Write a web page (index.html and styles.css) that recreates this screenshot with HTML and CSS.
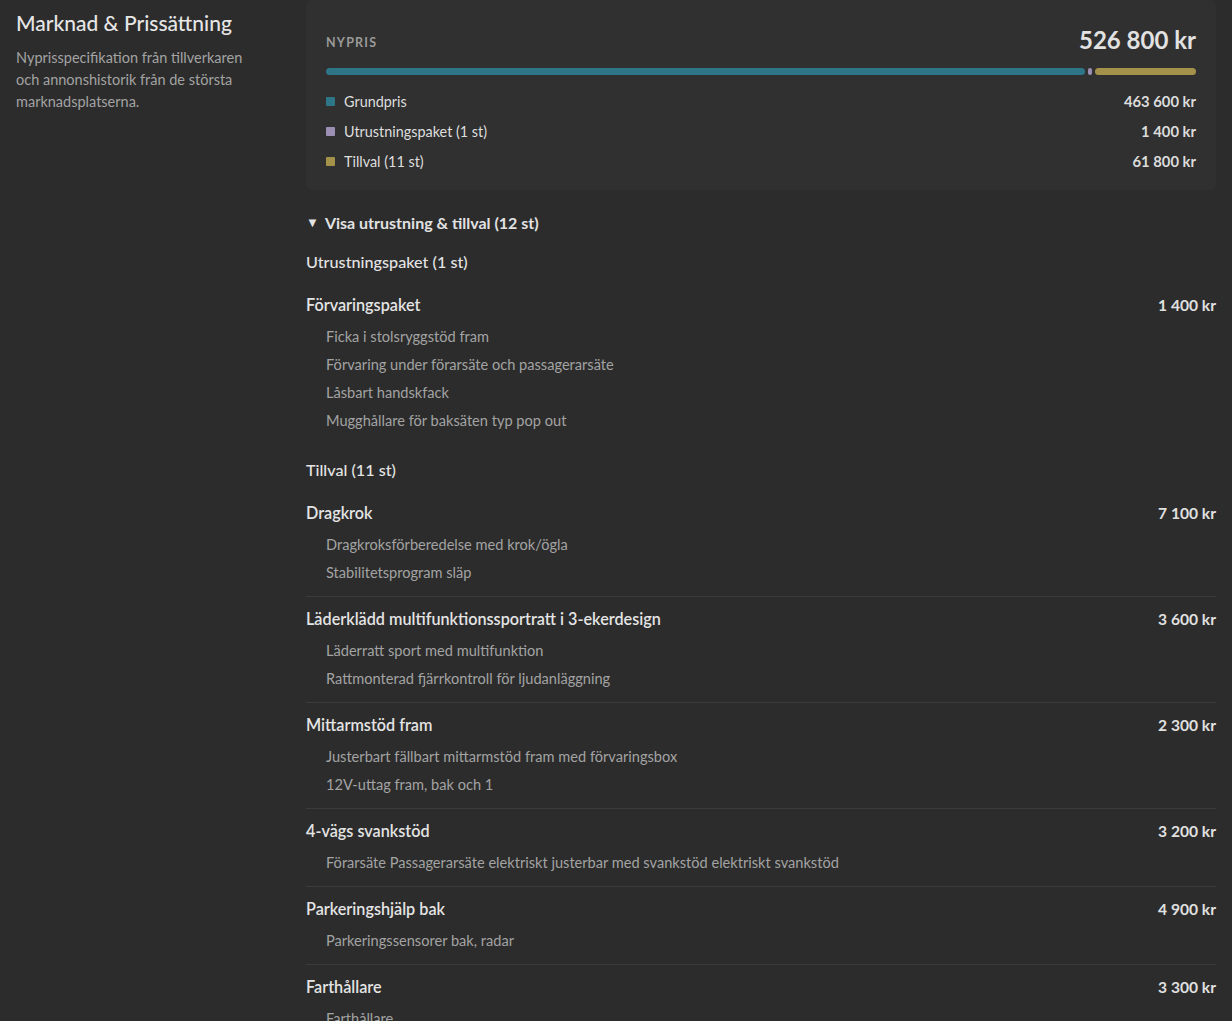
FILE: index.html
```html
<!DOCTYPE html>
<html>
<head>
    <title>Marknad &amp; Prissättning</title>
    <link rel="stylesheet" href="styles.css">
</head>
<body>
    <div class="page">
        <aside class="intro">
            <h1>Marknad &amp; Prissättning</h1>
            <p>Nyprisspecifikation från tillverkaren och annonshistorik från de största marknadsplatserna.</p>
        </aside>

        <main class="content">
            <section class="price-card">
                <div class="price-head">
                    <span class="label">Nypris</span>
                    <span class="total">526 800 kr</span>
                </div>
                <div class="bar">
                    <span class="seg seg-base" style="flex: 463600"></span>
                    <span class="seg seg-pkg" style="flex: 1400; min-width: 4px"></span>
                    <span class="seg seg-opt" style="flex: 61800"></span>
                </div>
                <ul class="legend">
                    <li><span class="dot seg-base"></span><span class="name">Grundpris</span><span class="amount">463 600 kr</span></li>
                    <li><span class="dot seg-pkg"></span><span class="name">Utrustningspaket (1 st)</span><span class="amount">1 400 kr</span></li>
                    <li><span class="dot seg-opt"></span><span class="name">Tillval (11 st)</span><span class="amount">61 800 kr</span></li>
                </ul>
            </section>

            <div class="toggle"><span class="caret">&#9660;</span>Visa utrustning &amp; tillval (12 st)</div>

            <h3 class="group-title">Utrustningspaket (1 st)</h3>
            <div class="item">
                <div class="item-head"><span>Förvaringspaket</span><span class="price">1 400 kr</span></div>
                <ul class="subs">
                    <li>Ficka i stolsryggstöd fram</li>
                    <li>Förvaring under förarsäte och passagerarsäte</li>
                    <li>Låsbart handskfack</li>
                    <li>Mugghållare för baksäten typ pop out</li>
                </ul>
            </div>

            <h3 class="group-title group-gap">Tillval (11 st)</h3>
            <div class="item">
                <div class="item-head"><span>Dragkrok</span><span class="price">7 100 kr</span></div>
                <ul class="subs">
                    <li>Dragkroksförberedelse med krok/ögla</li>
                    <li>Stabilitetsprogram släp</li>
                </ul>
            </div>
            <div class="item">
                <div class="item-head"><span>Läderklädd multifunktionssportratt i 3-ekerdesign</span><span class="price">3 600 kr</span></div>
                <ul class="subs">
                    <li>Läderratt sport med multifunktion</li>
                    <li>Rattmonterad fjärrkontroll för ljudanläggning</li>
                </ul>
            </div>
            <div class="item">
                <div class="item-head"><span>Mittarmstöd fram</span><span class="price">2 300 kr</span></div>
                <ul class="subs">
                    <li>Justerbart fällbart mittarmstöd fram med förvaringsbox</li>
                    <li>12V-uttag fram, bak och 1</li>
                </ul>
            </div>
            <div class="item">
                <div class="item-head"><span>4-vägs svankstöd</span><span class="price">3 200 kr</span></div>
                <ul class="subs">
                    <li>Förarsäte Passagerarsäte elektriskt justerbar med svankstöd elektriskt svankstöd</li>
                </ul>
            </div>
            <div class="item">
                <div class="item-head"><span>Parkeringshjälp bak</span><span class="price">4 900 kr</span></div>
                <ul class="subs">
                    <li>Parkeringssensorer bak, radar</li>
                </ul>
            </div>
            <div class="item">
                <div class="item-head"><span>Farthållare</span><span class="price">3 300 kr</span></div>
                <ul class="subs">
                    <li>Farthållare</li>
                </ul>
            </div>
        </main>
    </div>
</body>
</html>
```

FILE: styles.css
```css
body {
    font-family: 'Lato', 'Noto Sans', sans-serif;
    background-color: #2c2c2c;
    color: #e4e4e4;
    margin: 0;
    padding: 0;
}

ul {
    list-style: none;
    margin: 0;
    padding: 0;
}

.page {
    display: grid;
    grid-template-columns: 290px 910px;
    padding: 0 16px;
}

/* left column */
.intro h1 {
    font-size: 21px;
    font-weight: 500;
    color: #e6e6e6;
    margin: 9px 0 0;
    line-height: 28px;
}

.intro p {
    font-size: 14.5px;
    line-height: 22px;
    color: #a3a3a3;
    margin: 10px 0 0;
    width: 245px;
}

/* price card */
.price-card {
    background-color: #303030;
    border-radius: 6px;
    padding: 24px 20px 14px;
}

.price-head {
    display: flex;
    justify-content: space-between;
    align-items: center;
    height: 30px;
}

.label {
    text-transform: uppercase;
    font-size: 12.5px;
    font-weight: 700;
    letter-spacing: 1.2px;
    color: #9a9a9a;
    margin-top: 6px;
}

.total {
    font-size: 24px;
    font-weight: 700;
    color: #e2e2e2;
}

.bar {
    display: flex;
    gap: 3px;
    height: 7px;
    margin-top: 14px;
}

.seg {
    border-radius: 4px;
}

.seg-base { background-color: #2d7587; }
.seg-pkg { background-color: #9c8fb4; }
.seg-opt { background-color: #a5924a; }

.legend {
    margin-top: 11px;
}

.legend li {
    display: flex;
    align-items: center;
    height: 30px;
    font-size: 14.4px;
}

.dot {
    width: 9px;
    height: 9px;
    margin-right: 9px;
    border-radius: 1px;
}

.name {
    flex: 1;
    color: #dedede;
}

.amount {
    font-weight: 700;
    font-size: 14.8px;
    color: #dcdcdc;
}

/* equipment list */
.toggle {
    margin-top: 21px;
    font-size: 16px;
    font-weight: 700;
    line-height: 24px;
    color: #e2e2e2;
}

.caret {
    font-size: 13px;
    margin-right: 6px;
    position: relative;
    top: -2px;
}

.group-title {
    font-size: 16.2px;
    font-weight: 500;
    color: #e4e4e4;
    margin: 14px 0 9px;
    line-height: 24px;
}

.group-gap {
    margin-top: 14px;
}

.item {
    padding: 12px 0 9px;
}

.item + .item {
    border-top: 1px solid #3b3b3b;
}

.item-head {
    display: flex;
    justify-content: space-between;
    font-size: 16.2px;
    font-weight: 600;
    line-height: 20px;
    color: #e4e4e4;
}

.price {
    font-weight: 700;
    font-size: 15.6px;
    color: #e0e0e0;
}

.subs {
    margin-top: 8px;
    padding-left: 20px;
}

.subs li {
    font-size: 14.6px;
    line-height: 28px;
    color: #a3a3a3;
}
```
